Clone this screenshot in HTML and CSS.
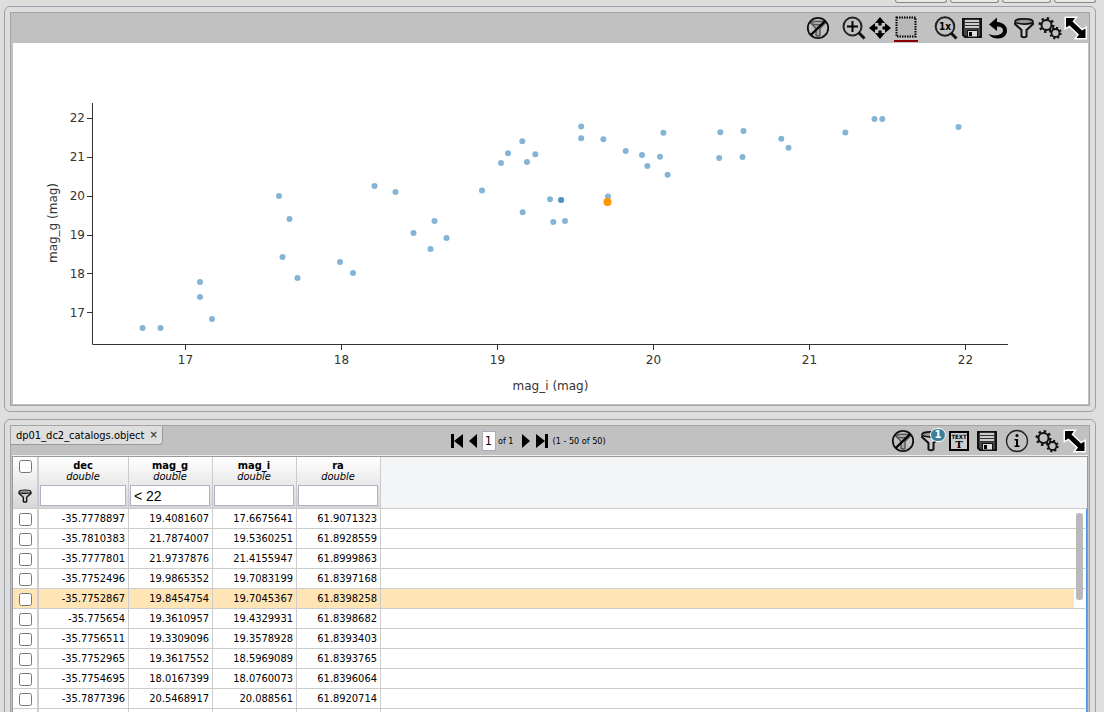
FILE: index.html
```
<!DOCTYPE html>
<html lang="en">
<head>
<meta charset="utf-8">
<title>dp01_dc2_catalogs.object</title>
<link rel="stylesheet" href="styles.css">
</head>
<body>
<svg class="sprite" aria-hidden="true">
  <symbol id="i-nofilter" viewBox="0 0 24 24">
    <g fill="#aaa" stroke="#555" stroke-width="1.5"><path d="M5 7l5 5.500v7q2 1 4 0v-7L19 7z"/><ellipse cx="12" cy="7" rx="6.500" ry="1.700"/></g>
    <circle cx="12" cy="12" r="10.200" fill="none" stroke="#111" stroke-width="1.800"/><path d="M4.800 19 19.200 5" stroke="#000" stroke-width="2.400"/>
  </symbol>
  <symbol id="i-filter" viewBox="0 0 24 24">
    <path d="M3 6.500v1.500l6.500 6v6.500q2.500 1.500 5 0v-6.500l6.500-6v-1.500" fill="#ccc" stroke="#111" stroke-width="2"/>
    <ellipse cx="12" cy="5.500" rx="9" ry="2.600" fill="#999" stroke="#111" stroke-width="1.600"/>
  </symbol>
  <symbol id="i-zoom" viewBox="0 0 24 24">
    <circle cx="10.500" cy="10.500" r="9" fill="none" stroke="#222" stroke-width="2"/><path d="m16.500 16.500 6 6" stroke="#111" stroke-width="3"/><path d="M10.500 5v11M5 10.500h11" stroke="#000" stroke-width="2"/>
  </symbol>
  <symbol id="i-pan" viewBox="0 0 24 24">
    <path d="m12 1 5 6h-3.500v2.500h-3V7H7zM12 23l5-6h-3.500v-2.500h-3V17H7zM1 12l6-5v3.500h2.500v3H7V17zM23 12l-6-5v3.500h-2.500v3H17V17z"/>
  </symbol>
  <symbol id="i-select" viewBox="0 0 24 24">
    <rect x="2.500" y="2.500" width="19" height="19" fill="#b8b8b8" stroke="#000" stroke-width="2" stroke-dasharray="1.500 1"/>
  </symbol>
  <symbol id="i-save" viewBox="0 0 24 24">
    <path d="M3 3h18v18H5l-2-2z" fill="#444" stroke="#111" stroke-width="2"/><path d="M5 3h14v9H5z" fill="#ccc"/><path d="M5 3.500h14M5 6.500h14M5 9.500h14M5 12.500h14" stroke="#333"/><path d="M7.500 14.500h10V21h-10z" fill="#ddd" stroke="#111"/><path d="M9 16h3v4H9z"/>
  </symbol>
  <symbol id="i-undo" viewBox="0 0 24 24">
    <path d="M3 8.500 11 1.500v4.500c6.500.5 10 4 10 8.500 0 5-4 8-9 8-4 0-7.500-1.500-9.500-4.500 2.500 1.200 5.500 1.700 8.500 1.300 3.800-.5 6-2.600 6-5 0-2.300-2-3.700-6-3.800V15z"/>
  </symbol>
  <symbol id="i-gears" viewBox="0 0 24 24">
    <g fill="none" stroke="#111"><circle cx="8.500" cy="9" r="5" stroke-width="2"/><circle cx="8.500" cy="9" r="6.700" stroke-width="2.600" stroke-dasharray="2.400 2.860"/><circle cx="17.500" cy="17" r="4" fill="#c1c1c1" stroke-width="1.800"/><circle cx="17.500" cy="17" r="5.200" stroke-width="2" stroke-dasharray="2 2.080"/></g>
  </symbol>
  <symbol id="i-expand" viewBox="0 0 24 24">
    <path id="arrows" d="M2 2h9L8.500 5.500l9.500 9L21.500 12.500V22h-9l2.500-3.500-9.500-9L2 11.500z" stroke="#fff" stroke-width="3"/>
    <path d="M2 2h9L8.500 5.500l9.500 9L21.500 12.500V22h-9l2.500-3.500-9.500-9L2 11.500z"/>
  </symbol>
  <symbol id="i-info" viewBox="0 0 24 24">
    <circle cx="12" cy="12" r="10.500" fill="none" stroke="#222" stroke-width="1.300"/><circle cx="12" cy="6.500" r="1.500"/><path d="M9.500 10H13v6.500h1.500V18h-5v-1.500H11v-5H9.500z"/>
  </symbol>
</svg>

<main class="app">
  <div class="app-actions">
    <button class="stub" aria-label="Action 1"></button><button class="stub" aria-label="Action 2"></button><button class="stub" aria-label="Action 3"></button><button class="stub" aria-label="Action 4"></button>
  </div>

  <section class="panel">
    <div class="frame">
      <div class="toolbar">
        <div class="tools">
          <button class="tool wide" aria-label="Clear filters"><svg><use href="#i-nofilter"/></svg></button>
          <button class="tool" aria-label="Zoom"><svg><use href="#i-zoom"/></svg></button>
          <button class="tool" aria-label="Pan"><svg><use href="#i-pan"/></svg></button>
          <button class="tool wider active" aria-label="Select"><svg><use href="#i-select"/></svg></button>
          <button class="tool" aria-label="Reset zoom"><svg viewBox="0 0 24 24"><circle cx="11" cy="10.500" r="9.300" fill="none" stroke="#222" stroke-width="2"/><path d="m17 17 5.500 5.500" stroke="#111" stroke-width="3"/><text x="11" y="14" class="glyph-zoom">1x</text></svg></button>
          <button class="tool" aria-label="Save"><svg><use href="#i-save"/></svg></button>
          <button class="tool" aria-label="Undo"><svg><use href="#i-undo"/></svg></button>
          <button class="tool" aria-label="Filter"><svg><use href="#i-filter"/></svg></button>
          <button class="tool" aria-label="Settings"><svg><use href="#i-gears"/></svg></button>
          <button class="tool" aria-label="Expand"><svg><use href="#i-expand"/></svg></button>
        </div>
      </div>
      <svg class="chart" viewBox="13 43 1075 361" role="img" aria-label="mag_g against mag_i">
        <path class="axis" d="M92.500 103V344.500H1008M87 118.500h5M87 157.500h5M87 196.500h5M87 235.500h5M87 273.500h5M87 312.500h5M185.500 345v5M341.500 345v5M497.500 345v5M653.500 345v5M809.500 345v5M965.500 345v5"/>
        <g class="ticks-y"><text x="85" y="122">22</text><text x="85" y="161">21</text><text x="85" y="200">20</text><text x="85" y="239">19</text><text x="85" y="278">18</text><text x="85" y="317">17</text></g>
        <g class="ticks-x"><text x="185.500" y="364">17</text><text x="341.500" y="364">18</text><text x="497.500" y="364">19</text><text x="653.500" y="364">20</text><text x="809.500" y="364">21</text><text x="965.500" y="364">22</text><text x="550.500" y="390">mag_i (mag)</text><text transform="translate(57 223) rotate(-90)">mag_g (mag)</text></g>
        <g class="points">
          <circle cx="142.500" cy="328" r="3"/><circle cx="160.500" cy="328" r="3"/><circle cx="212" cy="319" r="3"/><circle cx="200" cy="297" r="3"/><circle cx="200" cy="282" r="3"/><circle cx="297.500" cy="278" r="3"/><circle cx="282.500" cy="257" r="3"/><circle cx="289.500" cy="219" r="3"/><circle cx="279" cy="196" r="3"/><circle cx="340" cy="262" r="3"/><circle cx="353" cy="273" r="3"/><circle cx="374.500" cy="186" r="3"/><circle cx="395.500" cy="192" r="3"/><circle cx="413.500" cy="233" r="3"/><circle cx="430.500" cy="249" r="3"/><circle cx="434.500" cy="221" r="3"/><circle cx="446.500" cy="238" r="3"/><circle cx="482" cy="190.500" r="3"/><circle cx="501" cy="163" r="3"/><circle cx="508" cy="153.300" r="3"/><circle cx="522.300" cy="141.200" r="3"/><circle cx="527" cy="162" r="3"/><circle cx="535.300" cy="154.300" r="3"/><circle cx="522.700" cy="212.300" r="3"/><circle cx="550" cy="199.200" r="3"/><circle cx="561" cy="200" r="3"/><circle cx="561.200" cy="200" r="3"/><circle cx="553.300" cy="222" r="3"/><circle cx="565" cy="221" r="3"/><circle cx="581.200" cy="126.400" r="3"/><circle cx="581.200" cy="138.300" r="3"/><circle cx="603.400" cy="139.200" r="3"/><circle cx="608" cy="196.600" r="3"/><circle cx="625.700" cy="151" r="3"/><circle cx="642" cy="155" r="3"/><circle cx="647.400" cy="166" r="3"/><circle cx="660" cy="156.700" r="3"/><circle cx="663.400" cy="132.800" r="3"/><circle cx="667.600" cy="174.700" r="3"/><circle cx="720.300" cy="132.300" r="3"/><circle cx="719.200" cy="158" r="3"/><circle cx="743.500" cy="131" r="3"/><circle cx="742.500" cy="157" r="3"/><circle cx="781.300" cy="138.700" r="3"/><circle cx="788.500" cy="147.700" r="3"/><circle cx="845.300" cy="132.500" r="3"/><circle cx="874.500" cy="119" r="3"/><circle cx="882.300" cy="119" r="3"/><circle cx="958.500" cy="127" r="3"/>
        </g>
        <circle class="picked" cx="607.500" cy="202" r="4"/>
      </svg>
    </div>
  </section>

  <section class="panel">
    <div class="frame table-frame">
      <div class="toolbar">
        <div class="tab"><span>dp01_dc2_catalogs.object</span><button class="close" aria-label="Close tab">×</button></div>
        <div class="pager">
          <button aria-label="First page"><svg width="14" height="16"><path d="M1 1h3v14H1zM13 1v14L4 8z"/></svg></button>
          <button aria-label="Previous page"><svg width="10" height="16"><path d="M9 1v14L1 8z"/></svg></button>
          <input class="page" aria-label="Page" value="1">
          <span>of 1</span>
          <button class="next" aria-label="Next page"><svg width="10" height="16"><path d="M1 1v14l8-7z"/></svg></button>
          <button aria-label="Last page"><svg width="14" height="16"><path d="M1 1v14l9-7zM10 1h3v14h-3z"/></svg></button>
          <span>(1 - 50 of 50)</span>
        </div>
        <div class="tools spaced">
          <button class="tool" aria-label="Clear filters"><svg><use href="#i-nofilter"/></svg></button>
          <button class="tool" aria-label="Filters"><svg><use href="#i-filter"/></svg><span class="badge">1</span></button>
          <button class="tool" aria-label="Text view"><svg viewBox="0 0 24 24"><rect x="3" y="3" width="18" height="18" fill="#ccc" stroke="#000" stroke-width="2"/><text x="12" y="10" class="glyph-small">TEXT</text><text x="12" y="19" class="glyph-serif">T</text></svg></button>
          <button class="tool" aria-label="Save"><svg><use href="#i-save"/></svg></button>
          <button class="tool info" aria-label="Info"><svg><use href="#i-info"/></svg></button>
          <button class="tool" aria-label="Settings"><svg><use href="#i-gears"/></svg></button>
          <button class="tool" aria-label="Expand"><svg><use href="#i-expand"/></svg></button>
        </div>
      </div>
      <div class="grid">
        <table>
          <colgroup><col class="c-check"><col class="c-dec"><col class="c-num"><col class="c-num"><col class="c-num"><col></colgroup>
          <thead><tr>
            <th class="check"><input type="checkbox" aria-label="Select all"><svg class="mini"><use href="#i-filter"/></svg></th>
            <th><span class="name">dec</span><span class="type">double</span><input class="filter" aria-label="Filter dec"></th>
            <th><span class="name">mag_g</span><span class="type">double</span><input class="filter" aria-label="Filter mag_g" value="&lt; 22"></th>
            <th><span class="name">mag_i</span><span class="type">double</span><input class="filter" aria-label="Filter mag_i"></th>
            <th><span class="name">ra</span><span class="type">double</span><input class="filter" aria-label="Filter ra"></th>
            <td class="rest"></td>
          </tr></thead>
          <tbody>
            <tr><td class="check"><input type="checkbox" aria-label="Row 1"></td><td>-35.7778897</td><td>19.4081607</td><td>17.6675641</td><td>61.9071323</td><td class="rest"></td></tr>
            <tr><td class="check"><input type="checkbox" aria-label="Row 2"></td><td>-35.7810383</td><td>21.7874007</td><td>19.5360251</td><td>61.8928559</td><td class="rest"></td></tr>
            <tr><td class="check"><input type="checkbox" aria-label="Row 3"></td><td>-35.7777801</td><td>21.9737876</td><td>21.4155947</td><td>61.8999863</td><td class="rest"></td></tr>
            <tr><td class="check"><input type="checkbox" aria-label="Row 4"></td><td>-35.7752496</td><td>19.9865352</td><td>19.7083199</td><td>61.8397168</td><td class="rest"></td></tr>
            <tr class="current"><td class="check"><input type="checkbox" aria-label="Row 5"></td><td>-35.7752867</td><td>19.8454754</td><td>19.7045367</td><td>61.8398258</td><td class="rest"></td></tr>
            <tr><td class="check"><input type="checkbox" aria-label="Row 6"></td><td>-35.775654</td><td>19.3610957</td><td>19.4329931</td><td>61.8398682</td><td class="rest"></td></tr>
            <tr><td class="check"><input type="checkbox" aria-label="Row 7"></td><td>-35.7756511</td><td>19.3309096</td><td>19.3578928</td><td>61.8393403</td><td class="rest"></td></tr>
            <tr><td class="check"><input type="checkbox" aria-label="Row 8"></td><td>-35.7752965</td><td>19.3617552</td><td>18.5969089</td><td>61.8393765</td><td class="rest"></td></tr>
            <tr><td class="check"><input type="checkbox" aria-label="Row 9"></td><td>-35.7754695</td><td>18.0167399</td><td>18.0760073</td><td>61.8396064</td><td class="rest"></td></tr>
            <tr><td class="check"><input type="checkbox" aria-label="Row 10"></td><td>-35.7877396</td><td>20.5468917</td><td>20.088561</td><td>61.8920714</td><td class="rest"></td></tr>
            <tr><td class="check"></td><td></td><td></td><td></td><td></td><td class="rest"></td></tr>
          </tbody>
        </table>
        <div class="thumb"></div>
      </div>
    </div>
  </section>
</main>
</body>
</html>
```
FILE: styles.css
```
* { box-sizing: border-box; }
body { margin: 0; height: 100vh; overflow: hidden; background: #dedede; color: #000; font: 11px/14px "DejaVu Sans Condensed", "Noto Sans", sans-serif; }
button { padding: 0; border: 0; background: none; color: inherit; font: inherit; }
svg { display: block; }
.sprite { position: absolute; width: 0; height: 0; }
.app { display: flex; flex-direction: column; gap: 7px; padding: 0 8px 0 4px; }
.app-actions { display: flex; justify-content: flex-end; gap: 3px; height: 3px; margin-bottom: -4px; }
.stub { width: 49px; height: 3px; border: 1px solid #888; border-top: 0; border-radius: 0 0 4px 4px; background: #e8e8e8; }
.stub:first-child { width: 52px; }
.stub:last-child { width: 42px; }

.panel { padding: 5px; border: 1px solid #98a3ad; border-radius: 6px; }
.frame { padding: 0 1px 1px 2px; border: 1px solid #a3a3a3; background: #c1c1c1; }
.toolbar { display: flex; align-items: center; justify-content: flex-end; height: 30px; }
.tools { display: flex; gap: 2px; }
.tool { position: relative; width: 24px; height: 28px; }
.tool svg { width: 24px; height: 24px; }
.tool.wide { margin-right: 10px; }
.tool.wider { margin-right: 14px; }
.tool.active { border-bottom: 2px solid #8b0000; }
.spaced { gap: 4px; margin-right: 1px; }
.tool.info { margin: 0 2px; }
.glyph-serif, .glyph-small, .glyph-zoom { text-anchor: middle; }
.glyph-serif { font: bold 10px "DejaVu Serif", serif; }
.glyph-small { font: bold 6px "DejaVu Sans Condensed", sans-serif; }
.glyph-zoom { font: bold 10px "DejaVu Sans Condensed", sans-serif; }
.badge { position: absolute; top: 1px; left: 11px; width: 16px; height: 14px; border: 1px solid #fff; border-radius: 7px; background: #3b7f9e; color: #fff; font: bold 10px/12px "DejaVu Sans", sans-serif; }

.chart { width: 100%; height: auto; background: #fff; }
.axis { fill: none; stroke: #333; }
.ticks-x, .ticks-y { fill: #333; font: 12px "DejaVu Sans", sans-serif; }
.ticks-x { text-anchor: middle; }
.ticks-y { text-anchor: end; }
.points { fill: #1f77b4; fill-opacity: 0.55; }
.picked { fill: #ff9500; }

.table-frame { padding-left: 1px; }
.table-frame .toolbar { position: relative; justify-content: space-between; }
.tab { display: flex; align-self: flex-start; gap: 5px; height: 19px; margin-left: -1px; padding: 3px 4px 0 5px; border: 1px solid #999; border-width: 0 1px 1px 0; border-radius: 0 0 4px 0; background: #dedede; }
.close { height: 12px; color: #444; font-weight: bold; line-height: 12px; }
.pager { position: absolute; left: 50%; display: flex; align-items: center; gap: 4px; margin-left: -100px; font-size: 9px; }
.page { width: 14px; height: 20px; margin-right: -2px; padding: 0 2px; border: 1px solid #aab; font: 12px "DejaVu Sans Condensed", sans-serif; }
.next { margin-left: 3px; }

.grid { position: relative; border: 1px solid #999; border-width: 1px 1px 0; background: #fff; box-shadow: 0 -1px #eee; }
table { width: 100%; border-collapse: separate; border-spacing: 0; table-layout: fixed; }
.c-check { width: 26px; }
.c-dec { width: 90px; }
.c-num { width: 84px; }
th, td { height: 20px; padding: 1px 3px 0 0; border: 1px solid #ccc; border-width: 0 1px 1px 0; text-align: right; line-height: 14px; }
th { height: 52px; padding: 3px 2px 2px 1px; background: linear-gradient(#fff, #d6d6d6); text-align: center; vertical-align: top; font-weight: normal; }
.name { display: block; height: 11px; line-height: 12px; font-weight: bold; }
.type { display: block; height: 12px; line-height: 12px; font-style: italic; }
.filter { display: block; width: 100%; height: 21px; margin-top: 2px; padding: 0 3px; border: 1px solid #b0b1c6; background: #fff; font: 14px "Liberation Sans", sans-serif; }
.check { padding: 1px 0 0; border-right: 2px solid #ccc; text-align: center; }
th.check { padding-top: 3px; }
.check input { display: block; width: 13px; height: 13px; margin: 0 auto; }
.mini { width: 16px; height: 16px; margin: 15px auto 0; }
.rest { border-right: 0; }
thead .rest { background: #f4f5f7; }
tbody .rest { border-right: 1px solid #4a90e2; }
.current td { background: #ffe4b5; }
.current .rest { background: linear-gradient(to left, #fff 12px, #ffe4b5 12px); }
.thumb { position: absolute; top: 56px; right: 4px; width: 7px; height: 87px; border-radius: 3px; background: #b9b9b9; }
```
